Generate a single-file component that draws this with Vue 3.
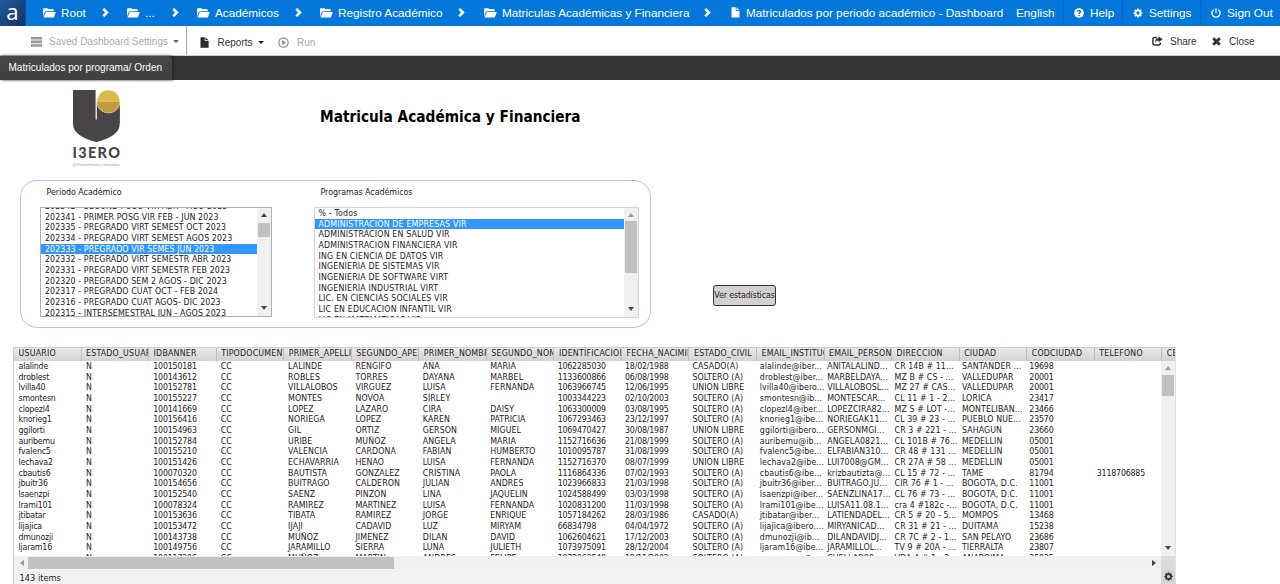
<script setup>
const crumbs = ['Root', '...', 'Académicos', 'Registro Académico', 'Matriculas Académicas y Financiera', 'Matriculados por periodo académico - Dashboard']

const periods = [
  '202342 - SEGUND POSG VIR ABR - AGO 2023',
  '202341 - PRIMER POSG VIR FEB - JUN 2023',
  '202335 - PREGRADO VIRT SEMEST OCT 2023',
  '202334 - PREGRADO VIRT SEMEST AGOS 2023',
  '202333 - PREGRADO VIR SEMES JUN 2023',
  '202332 - PREGRADO VIRT SEMESTR ABR 2023',
  '202331 - PREGRADO VIRT SEMESTR FEB 2023',
  '202320 - PREGRADO SEM 2 AGOS - DIC 2023',
  '202317 - PREGRADO CUAT OCT - FEB 2024',
  '202316 - PREGRADO CUAT AGOS- DIC 2023',
  '202315 - INTERSEMESTRAL JUN - AGOS 2023'
]

const programs = [
  '% - Todos',
  'ADMINISTRACION DE EMPRESAS VIR',
  'ADMINISTRACION EN SALUD VIR',
  'ADMINISTRACION FINANCIERA VIR',
  'ING EN CIENCIA DE DATOS VIR',
  'INGENIERIA DE SISTEMAS VIR',
  'INGENIERIA DE SOFTWARE VIRT',
  'INGENIERIA INDUSTRIAL VIRT',
  'LIC. EN CIENCIAS SOCIALES VIR',
  'LIC EN EDUCACION INFANTIL VIR',
  'LIC EN MATEMATICAS VIR'
]

const headers = ['USUARIO', 'ESTADO_USUARIO', 'IDBANNER', 'TIPODOCUMENTO', 'PRIMER_APELLIDO', 'SEGUNDO_APELLIDO', 'PRIMER_NOMBRE', 'SEGUNDO_NOMBRE', 'IDENTIFICACION', 'FECHA_NACIMIENTO', 'ESTADO_CIVIL', 'EMAIL_INSTITUCIONAL', 'EMAIL_PERSONAL', 'DIRECCION', 'CIUDAD', 'CODCIUDAD', 'TELEFONO', 'CELULAR']

const rows = `alalinde|N|100150181|CC|LALINDE|RENGIFO|ANA|MARIA|1062285030|18/02/1988|CASADO(A)|alalinde@iber...|ANITALALIND...|CR 14B # 11...|SANTANDER ...|19698|
droblest|N|100143612|CC|ROBLES|TORRES|DAYANA|MARBEL|1133600866|06/08/1998|SOLTERO (A)|droblest@iber...|MARBELDAYA...|MZ B # CS - ...|VALLEDUPAR|20001|
lvilla40|N|100152781|CC|VILLALOBOS|VIRGUEZ|LUISA|FERNANDA|1063966745|12/06/1995|UNION LIBRE|lvilla40@ibero...|VILLALOBOSL...|MZ 27 # CAS...|VALLEDUPAR|20001|
smontesn|N|100155227|CC|MONTES|NOVOA|SIRLEY||1003344223|02/10/2003|SOLTERO (A)|smontesn@ib...|MONTESCAR...|CL 11 # 1 - 2...|LORICA|23417|
clopezl4|N|100141669|CC|LOPEZ|LAZARO|CIRA|DAISY|1063300009|03/08/1995|SOLTERO (A)|clopezl4@iber...|LOPEZCIRA82...|MZ S # LOT -...|MONTELIBAN...|23466|
knorieg1|N|100156416|CC|NORIEGA|LOPEZ|KAREN|PATRICIA|1067293463|23/12/1997|SOLTERO (A)|knorieg1@ibe...|NORIEGAK11...|CL 39 # 23 - ...|PUEBLO NUE...|23570|
ggilorti|N|100154963|CC|GIL|ORTIZ|GERSON|MIGUEL|1069470427|30/08/1987|UNION LIBRE|ggilorti@ibero...|GERSONMGI...|CR 3 # 221 - ...|SAHAGUN|23660|
auribemu|N|100152784|CC|URIBE|MUÑOZ|ANGELA|MARIA|1152716636|21/08/1999|SOLTERO (A)|auribemu@ib...|ANGELA0821...|CL 101B # 76...|MEDELLIN|05001|
fvalenc5|N|100155210|CC|VALENCIA|CARDONA|FABIAN|HUMBERTO|1010095787|31/08/1999|SOLTERO (A)|fvalenc5@ibe...|ELFABIAN310...|CR 48 # 131 ...|MEDELLIN|05001|
lechava2|N|100151426|CC|ECHAVARRIA|HENAO|LUISA|FERNANDA|1152716370|08/07/1999|UNION LIBRE|lechava2@ibe...|LUI7008@GM...|CR 27A # 58 ...|MEDELLIN|05001|
cbautis6|N|100070320|CC|BAUTISTA|GONZALEZ|CRISTINA|PAOLA|1116864336|07/02/1993|SOLTERO (A)|cbautis6@ibe...|krizbautizta@...|CL 15 # 72 - ...|TAME|81794|3118706885
jbuitr36|N|100154656|CC|BUITRAGO|CALDERON|JULIAN|ANDRES|1023966833|21/03/1998|SOLTERO (A)|jbuitr36@iber...|BUITRAGO.JU...|CIR 76 # 1 - ...|BOGOTA, D.C.|11001|
lsaenzpi|N|100152540|CC|SAENZ|PINZON|LINA|JAQUELIN|1024588499|03/03/1998|SOLTERO (A)|lsaenzpi@iber...|SAENZLINA17...|CL 76 # 73 - ...|BOGOTA, D.C.|11001|
lrami101|N|100078324|CC|RAMIREZ|MARTINEZ|LUISA|FERNANDA|1020831200|11/03/1998|SOLTERO (A)|lrami101@ibe...|LUISA11.08.1...|cra 4 #182c -...|BOGOTA, D.C.|11001|
jtibatar|N|100153636|CC|TIBATA|RAMIREZ|JORGE|ENRIQUE|1057184262|28/03/1986|CASADO(A)|jtibatar@iber...|LATIENDADEL...|CR 5 # 20 - 5...|MOMPOS|13468|
lijajica|N|100153472|CC|IJAJI|CADAVID|LUZ|MIRYAM|66834798|04/04/1972|SOLTERO (A)|lijajica@ibero....|MIRYANICAD...|CR 31 # 21 - ...|DUITAMA|15238|
dmunozji|N|100143738|CC|MUÑOZ|JIMENEZ|DILAN|DAVID|1062604621|17/12/2003|SOLTERO (A)|dmunozji@ib...|DILANDAVIDJ...|CR 7C # 2 - 1...|SAN PELAYO|23686|
ljaram16|N|100149756|CC|JARAMILLO|SIERRA|LUNA|JULIETH|1073975091|28/12/2004|SOLTERO (A)|ljaram16@ibe...|JARAMILLOL...|TV 9 # 20A - ...|TIERRALTA|23807|
amunozma|N|100117296|CC|MUÑOZ|MARTIN|ANDRES|FELIPE|1073962548|18/11/2002|SOLTERO (A)|amunozma@...|CUELLAR89...|VDA 4 # 1 - 2...|ANAPOIMA|25035|`
  .split('\n').map(line => line.split('|'))

const tightColumns = [0, 2, 8, 9, 15, 16]
</script>

<template>
  <div class="page">
    <header class="topbar">
      <div class="brand">a</div>
      <nav class="crumbs">
        <template v-for="(c, i) in crumbs" :key="c">
          <span class="crumb">
            <svg v-if="i < 5" class="folder" viewBox="0 0 13 10"><path d="M0 8.4V1.2Q0 .2 1 .2H4.2Q5 .2 5.2 1.1H9.8Q10.7 1.1 10.7 2.2V3.2H3.2Q2.2 3.2 1.7 4.2Z" /><path d="M2.9 3.9H12.9L10.8 9.6H.4Z" /></svg>
            <svg v-else class="file" viewBox="0 0 9 11"><path d="M.5.3H4.8V4H8.5V10.6H.5Z" /><path d="M5.5.3L8.5 3.3H5.5Z" /></svg>
            <span>{{ c }}</span>
          </span>
          <svg v-if="i < 5" class="chev" viewBox="0 0 7 9"><path d="M1.3 .9L4.9 4.5L1.3 8.1" /></svg>
        </template>
      </nav>
      <div class="links">
        <span class="lang">English</span>
        <span class="link help">
          <svg viewBox="0 0 10 10"><circle cx="5" cy="5" r="4.8" fill="#fff" /><path d="M3.5 3.8Q3.6 2.5 5 2.5T6.5 3.8Q6.5 4.4 5.7 4.8T5 6" fill="none" stroke="#0377da" stroke-width="1.3" /><path d="M4.3 6.8H5.7V8H4.3Z" fill="#0377da" /></svg>
          <span>Help</span>
        </span>
        <span class="link settings">
          <svg viewBox="0 0 10 10"><circle cx="5" cy="5" r="2.6" fill="none" stroke="#fff" stroke-width="1.9" /><path d="M5 .6V2M5 8V9.4M.6 5H2M8 5H9.4M1.9 1.9L2.8 2.8M7.2 7.2L8.1 8.1M8.1 1.9L7.2 2.8M2.8 7.2L1.9 8.1" stroke="#fff" stroke-width="1.7" /></svg>
          <span>Settings</span>
        </span>
        <span class="link signout">
          <svg viewBox="0 0 10 10"><path d="M2.7 1.7A4.1 4.1 0 1 0 7.3 1.7M5 .2V5" fill="none" stroke="#fff" stroke-width="1.3" /></svg>
          <span>Sign Out</span>
        </span>
      </div>
    </header>

    <div class="toolbar">
      <div class="tool saved">
        <svg viewBox="0 0 11 10"><path d="M0 0H11V2.6H0ZM0 3.6H11V6.2H0ZM0 7.2H11V9.8H0Z" fill="#8f8f8f" /><path d="M1 1.3H10M1 4.9H10M1 8.5H10" stroke="#bbb" stroke-width=".5" /></svg>
        <span>Saved Dashboard Settings</span><i class="caret"></i>
      </div>
      <div class="tool reports">
        <svg viewBox="0 0 9 11"><path d="M.5.3H4.7V4H8.6V10.7H.5Z" fill="#2b2b2b" /><path d="M5.5.3L8.6 3.2H5.5Z" fill="#2b2b2b" /></svg>
        <span>Reports</span><i class="caret"></i>
      </div>
      <div class="tool run">
        <svg viewBox="0 0 11 11"><circle cx="5.5" cy="5.5" r="4.7" fill="none" stroke="#8e8e8e" stroke-width="1.2" /><path d="M4.1 3L8 5.5L4.1 8Z" fill="#8e8e8e" /></svg>
        <span>Run</span>
      </div>
      <div class="tool share">
        <svg viewBox="0 0 11 10"><path d="M5 1.4H2.4Q.9 1.4.9 2.9V7.4Q.9 8.9 2.4 8.9H6.8Q8.3 8.9 8.3 7.4V6.4" fill="none" stroke="#333" stroke-width="1.5" /><path d="M6.5.2L10.7 3.2L6.5 6.2V4.5Q4.4 4.3 3.5 6.6Q2.7 2.4 6.5 2Z" fill="#333" /></svg>
        <span>Share</span>
      </div>
      <div class="tool close">
        <svg viewBox="0 0 9 9"><path d="M1.2 1.2L7.8 7.8M7.8 1.2L1.2 7.8" stroke="#333" stroke-width="2.9" /></svg>
        <span>Close</span>
      </div>
    </div>

    <div class="tabs"><div class="tab"><span>Matriculados por programa/ Orden</span></div></div>

    <main class="content">
      <section class="heading">
        <svg class="logo" viewBox="0 0 52 82">
          <path d="M1 1H47.7V35Q47.7 47 24.4 53Q1 47 1 35Z" fill="#494546" />
          <path d="M24 0H48V14H24.9V30.5H23.6V0Z" fill="#fff" />
          <path d="M24.9 12H47.7V34H24.9Z" fill="#494546" />
          <circle cx="36.4" cy="12.6" r="11.7" fill="#fff" />
          <path d="M25.1 12.6A11.3 11.3 0 0 1 47.7 12.6Z" fill="#dabb49" />
          <path d="M25.1 12.6A11.3 11.3 0 0 0 47.7 12.6Z" fill="#c29b3e" />
          <text x="0.4" y="68.7" textLength="47.5" class="logo-name">I3ERO</text>
          <circle cx="2.5" cy="75.8" r="1.5" fill="none" stroke="#aaa" stroke-width=".6" />
          <text x="5" y="77.2" textLength="43" lengthAdjust="spacingAndGlyphs" class="logo-sub">Planeta Formación y Universidades</text>
        </svg>
        <h1>Matricula Académica y Financiera</h1>
      </section>

      <section class="filters">
        <div class="panel">
          <div class="field period">
            <label>Periodo Académico</label>
            <div class="listbox">
              <div class="options">
                <div v-for="(p, i) in periods" :key="p" class="option" :class="{ selected: i === 4 }"><span>{{ p }}</span></div>
              </div>
              <div class="vbar"><i class="up"></i><b></b><i class="down"></i></div>
            </div>
          </div>
          <div class="field program">
            <label>Programas Académicos</label>
            <div class="listbox">
              <div class="options">
                <div v-for="(p, i) in programs" :key="p" class="option" :class="{ selected: i === 1 }"><span>{{ p }}</span></div>
              </div>
              <div class="vbar"><i class="up dim"></i><b></b><i class="down"></i></div>
            </div>
          </div>
        </div>
        <button class="stats"><span>Ver estadísticas</span></button>
      </section>

      <section class="table">
        <div class="thead"><div v-for="h in headers" :key="h" class="th"><div class="clip">{{ h }}</div></div></div>
        <div class="tbody">
          <div class="rows">
            <div v-for="r in rows" :key="r[0]" class="tr">
              <div v-for="(c, i) in r" :key="i" class="td" :class="{ tight: tightColumns.includes(i) }">{{ c }}</div>
            </div>
          </div>
          <div class="vbar"><i class="up dim"></i><b></b><i class="down"></i></div>
        </div>
        <div class="hbar"><i class="left"></i><b></b><i class="right"></i><em></em></div>
        <div class="tfoot">
          <span>143 items</span>
          <div class="gear">
            <svg viewBox="0 0 10 10"><circle cx="5" cy="5" r="2.7" fill="none" stroke="#333" stroke-width="1.9" /><path d="M5 .3V2M5 8V9.7M.3 5H2M8 5H9.7M1.7 1.7L2.8 2.8M7.2 7.2L8.3 8.3M8.3 1.7L7.2 2.8M2.8 7.2L1.7 8.3" stroke="#333" stroke-width="1.8" /></svg>
          </div>
        </div>
      </section>
    </main>
  </div>
</template>

<style>
body { background: #fff; }
</style>

<style scoped>
.page { width: 1280px; height: 584px; overflow: hidden; display: flex; flex-direction: column; background: #fff; font-family: "DejaVu Sans Condensed", "DejaVu Sans", sans-serif; font-stretch: condensed; font-size: 8.75px; color: #222; white-space: nowrap; }
.page * { box-sizing: border-box; }
svg { display: block; flex: none; }
.topbar { height: 26px; flex: none; display: flex; background: #0377da; color: #fff; font: 11.75px/25px "Liberation Sans", Arial, sans-serif; }
.brand { width: 26px; background: linear-gradient(135deg, #23589a, #123565); border-right: 1px solid #0b4d96; font: 22px/23px "Noto Sans", sans-serif; text-align: center; }
.crumbs { width: 990px; height: 25px; padding-left: 17px; display: grid; grid-template-columns: 59px 25px 45px 25px 98px 25px 138px 26px 220px 27px 285px; align-items: center; }
.crumb { display: flex; align-items: center; }
.folder { width: 13px; height: 10px; margin-right: 5px; fill: #fff; }
.file { width: 9px; height: 11px; margin-right: 6px; fill: #fff; }
.chev { width: 7px; height: 9px; fill: none; stroke: #fff; stroke-width: 2.6; }
.links { flex: 1; display: flex; }
.lang { width: 47px; }
.link { border-left: 1px solid #0567c0; display: flex; align-items: center; padding-left: 10px; gap: 6px; padding-bottom: 1px; }
.link svg { width: 10px; height: 10px; }
.help { width: 59px; }
.settings { width: 78px; }
.signout { width: 80px; }
.toolbar { height: 30px; flex: none; display: flex; border-bottom: 1px solid #ccc; font: 10px/31px "Liberation Sans", Arial, sans-serif; color: #333; }
.tool { display: flex; align-items: center; height: 32px; }
.caret { width: 0; height: 0; border: 3.5px solid transparent; border-top-color: #222; border-bottom: 0; margin-left: 5px; }
.saved { width: 187px; height: 29px; padding: 2px 0 0 31px; color: #aaa; border-right: 1px solid #aaa; }
.saved svg { width: 11px; height: 10px; margin-right: 7px; }
.saved .caret { border-top-color: #666; }
.reports { width: 91px; padding-left: 13px; }
.reports svg { width: 9px; height: 11px; margin-right: 8.5px; }
.run { width: 874px; color: #aaa; }
.run svg { width: 11px; height: 11px; margin-right: 8px; }
.share { width: 60px; height: 30px; }
.share svg { width: 11px; height: 10px; margin-right: 7px; }
.close { height: 30px; }
.close svg { width: 9px; height: 9px; margin-right: 8px; }
.tabs { height: 24px; flex: none; background: #333; }
.tab { width: 172px; height: 24px; padding-left: 8.5px; background: linear-gradient(#474747, #404040); border-radius: 0 4px 0 0; box-shadow: 1px 0 3px #222; color: #fff; font: 10.05px/24px "Liberation Sans", Arial, sans-serif; }
.content { flex: 1; display: flex; flex-direction: column; }
.heading { height: 100px; flex: none; display: flex; padding-left: 72px; }
.logo { width: 52px; height: 82px; margin-top: 9px; margin-right: 196px; }
.logo-name { font: 900 14.5px "Lato", sans-serif; fill: #494546; }
.logo-sub { font: 3.6px "Liberation Sans", sans-serif; fill: #999; }
h1 { margin: 25px 0 0; font-size: 15.25px; line-height: 24px; font-weight: bold; color: #000; }
.filters { height: 167px; flex: none; display: flex; padding-left: 20px; }
.panel { width: 631px; height: 148px; border: 1px solid #adc5e6; border-radius: 17px; display: flex; padding-left: 19px; }
.field { width: 274px; }
label { display: block; height: 26px; padding-left: 6.5px; line-height: 23.5px; }
.listbox { height: 110px; border: 1px solid #b0b0b0; display: flex; overflow: hidden; }
.period .listbox { width: 232px; }
.program .listbox { width: 325px; height: 111px; border-color: #d2d6dc; }
.options { flex: 1; height: 100%; overflow: hidden; }
.option { height: 10.67px; line-height: 10.67px; padding-left: 4px; letter-spacing: .1px; }
.program .option { letter-spacing: .17px; padding-left: 3.5px; }
.period .option:first-child { margin-top: -7px; }
.selected { background: #3297fd; color: #fff; }
.vbar { width: 14px; background: #f0f0f0; display: flex; flex-direction: column; align-items: center; }
.vbar i { width: 0; height: 0; border: 3.5px solid transparent; }
.vbar .up { border-bottom: 4px solid #444; border-top: 0; margin-top: 5px; }
.vbar .dim { border-bottom-color: #999; }
.vbar .down { border-top: 4px solid #444; border-bottom: 0; margin-top: auto; margin-bottom: 6px; }
.vbar b { width: 12px; height: 14px; background: #c1c1c1; margin-top: 6px; }
.program .vbar b { height: 52px; margin-top: 4px; }
.stats { width: 63px; height: 21px; margin: 105px 0 0 62px; padding: 0 0 2px; display: flex; justify-content: center; align-items: center; border: 1px solid #333; border-radius: 3px; background: #d2d1cf; font: inherit; color: #222; letter-spacing: -.1px; }
.table { width: 1163px; height: 237px; margin-left: 13px; border-left: 1px solid #ccc; border-right: 1px solid #e2e2e2; background: #fff; }
.thead { height: 14px; display: flex; overflow: hidden; background: linear-gradient(#e9e9e9, #d2d2d2); border-top: 1px solid #ccc; letter-spacing: .2px; }
.th { width: 67.55px; flex: none; padding-left: 4.5px; line-height: 11px; border-right: 1px solid #bcbcbc; }
.clip { overflow: hidden; }
.tbody { height: 195px; display: flex; overflow: hidden; }
.rows { width: 1147px; flex: none; overflow: hidden; }
.tr { display: flex; height: 10.67px; line-height: 11.5px; letter-spacing: .08px; }
.td { width: 67.4px; flex: none; padding-left: 4.5px; height: 11.5px; }
.tight { letter-spacing: -.18px; }
.tbody .vbar b { width: 12px; height: 21px; margin-top: 5px; }
.hbar { height: 13px; background: #f0f0f0; display: flex; align-items: center; }
.hbar i { width: 0; height: 0; border: 3.5px solid transparent; }
.hbar .left { border-right: 4px solid #999; border-left: 0; margin: 0 4px 0 6px; }
.hbar .right { border-left: 4px solid #444; border-right: 0; margin: 0 5px 0 auto; }
.hbar b { width: 366px; height: 12px; background: #c1c1c1; }
.hbar em { width: 14px; height: 13px; background: #dcdcdc; }
.tfoot { height: 15px; padding-left: 5.5px; background: #f3f3f3; display: flex; justify-content: space-between; font-size: 9.2px; line-height: 17px; }
.gear { width: 14px; height: 15px; background: #d6d6d6; display: flex; align-items: center; justify-content: center; }
.gear svg { width: 9px; height: 9px; }
</style>
